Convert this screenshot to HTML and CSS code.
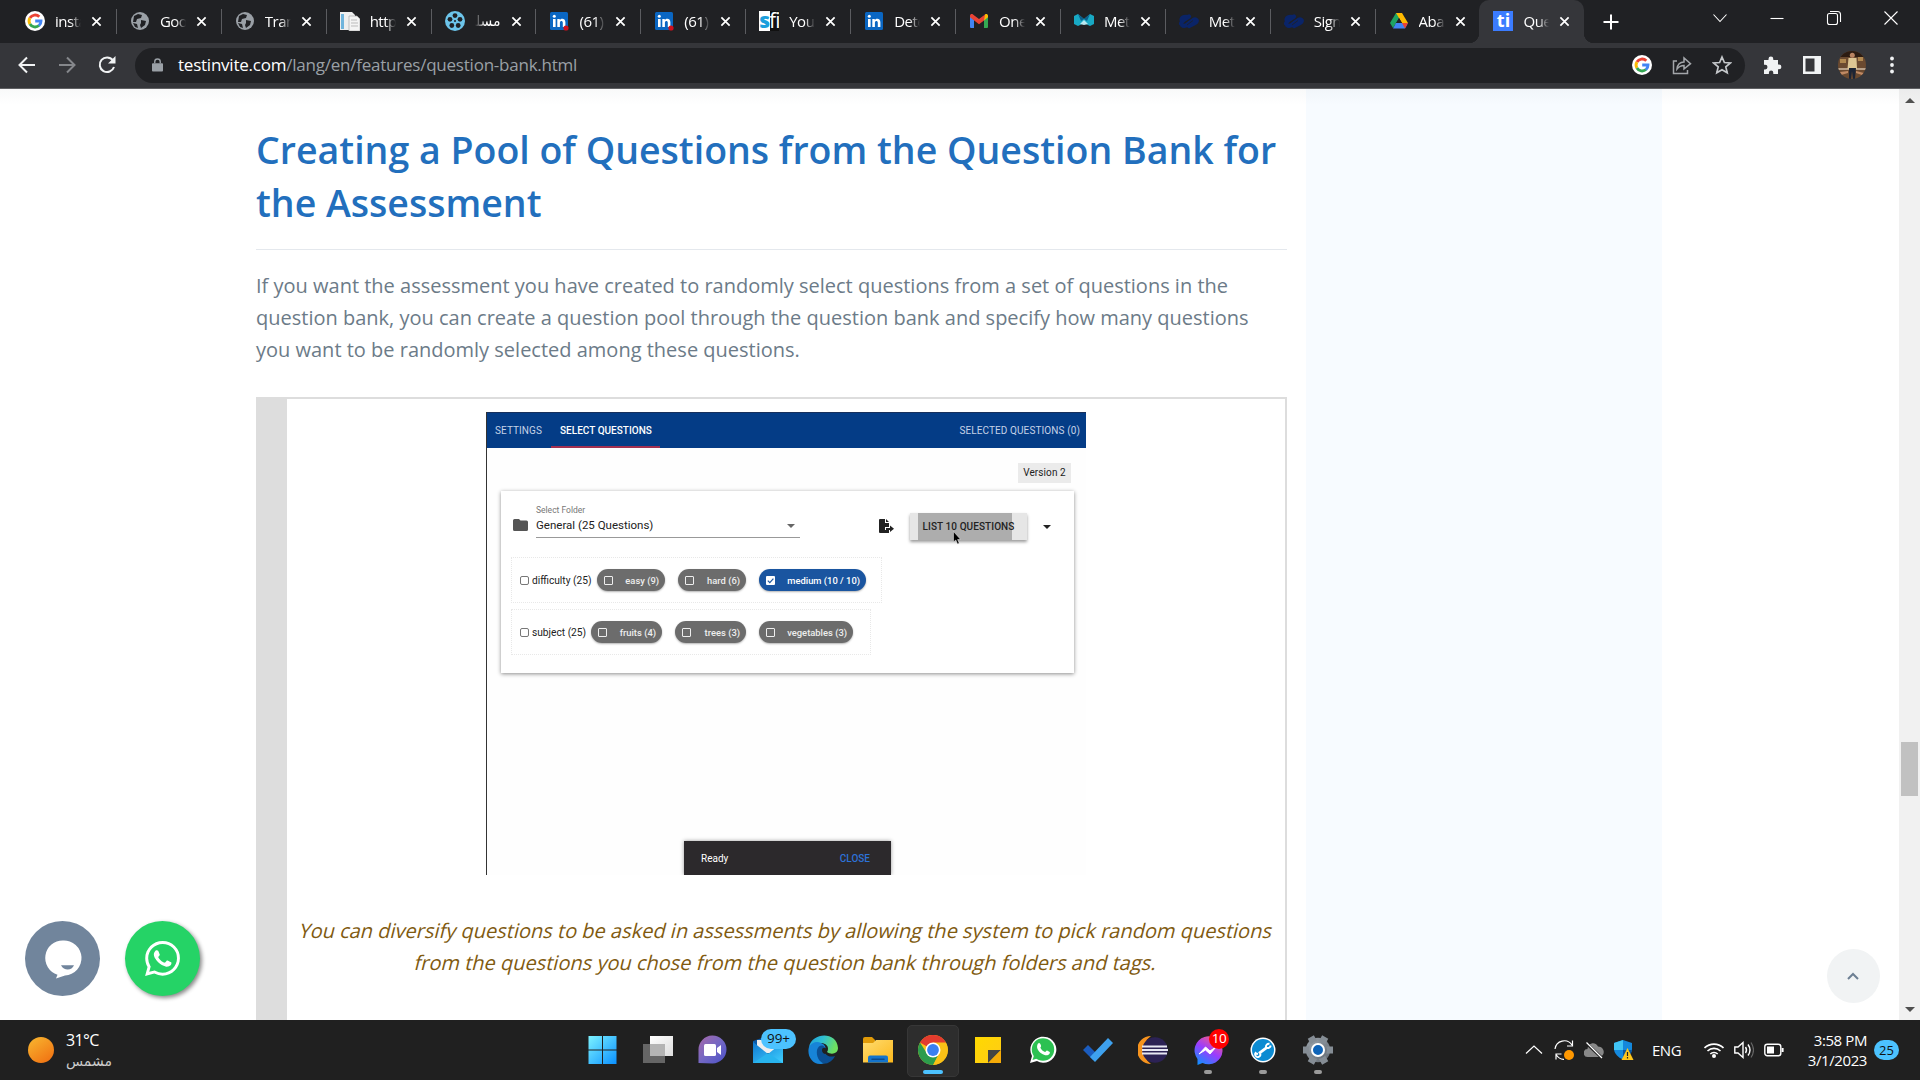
FILE: index.html
```html
<!DOCTYPE html>
<html lang="en">
<head>
<meta charset="utf-8">
<title>Question Bank</title>
<link rel="stylesheet" href="styles.css">
</head>
<body>
<svg class="defs" width="0" height="0" aria-hidden="true">
  <defs>
    <linearGradient id="gWin" x1="0" y1="0" x2="1" y2="1"><stop offset="0" stop-color="#7df3ff"/><stop offset="1" stop-color="#0a90ff"/></linearGradient>
    <linearGradient id="gTask" x1="0" y1="0" x2="1" y2="1"><stop offset="0" stop-color="#fff"/><stop offset="1" stop-color="#ddd"/></linearGradient>
    <linearGradient id="gTeams" x1="0" y1="0" x2="1" y2="1"><stop offset="0" stop-color="#a868a8"/><stop offset=".5" stop-color="#7468c4"/><stop offset="1" stop-color="#4a50c8"/></linearGradient>
    <linearGradient id="gFolder" x1="0" y1="0" x2="1" y2="1"><stop offset="0" stop-color="#ffdc70"/><stop offset="1" stop-color="#fcb81c"/></linearGradient>
    <linearGradient id="gEdge" x1="0" y1="0" x2="1" y2=".3"><stop offset="0" stop-color="#1c9ce0"/><stop offset=".5" stop-color="#30c0d0"/><stop offset="1" stop-color="#6ee060"/></linearGradient>
    <linearGradient id="gMsg" x1=".8" y1="0" x2=".2" y2="1"><stop offset="0" stop-color="#ff5f7a"/><stop offset=".5" stop-color="#9a3cff"/><stop offset="1" stop-color="#1090ff"/></linearGradient>
    <linearGradient id="gGear" x1="0" y1="0" x2="1" y2="1"><stop offset="0" stop-color="#9aa2aa"/><stop offset="1" stop-color="#646c74"/></linearGradient>
    <linearGradient id="gNote" x1="0" y1="0" x2="1" y2="1"><stop offset="0" stop-color="#ffd900"/><stop offset=".7" stop-color="#ffcf10"/><stop offset="1" stop-color="#f8a800"/></linearGradient>
    <linearGradient id="gMail" x1="0" y1="0" x2="1" y2="1"><stop offset="0" stop-color="#0f78d0"/><stop offset="1" stop-color="#40d0ff"/></linearGradient>
    <symbol id="close" viewBox="0 0 12 12"><path d="M1.5 1.5l9 9M10.500 1.500l-9 9" stroke="#fff" stroke-width="1.900" fill="none"/></symbol>
    <symbol id="google" viewBox="0 0 20 20"><circle cx="10" cy="10" r="10" fill="#fff"/><g fill="none" stroke-width="2.900"><path d="M4.900 7A6 6 0 0 1 14.300 5.800" stroke="#ea4335"/><path d="M4.900 13A6 6 0 0 1 4.900 7" stroke="#fbbc05"/><path d="M14 14.500A6 6 0 0 1 4.900 13" stroke="#34a853"/><path d="M10.200 10H16A6 6 0 0 1 13.900 14.600" stroke="#4285f4"/></g></symbol>
    <symbol id="globe" viewBox="0 0 20 20"><circle cx="10" cy="10" r="9" fill="#9aa0a6"/><path d="M4 5l4-2 4 1-1 3-4 1-1 3-3 0zM11 9l5 1-1 4-4 3-1-3 1-2zM3 12l4 1 1 4-3-1z" fill="#202124"/></symbol>
    <symbol id="linkedin" viewBox="0 0 20 20"><rect x="1" y="1" width="18" height="18" rx="1.500" fill="#0a66c2"/><path d="M4 8h2.600v8H4zM8.300 8h2.500v1.200c1.500-2.300 5.600-1.700 5.600 2V16h-2.600v-4.300c0-2.200-2.900-2-2.900 0V16H8.300z" fill="#fff"/><circle cx="5.300" cy="5.300" r="1.500" fill="#fff"/></symbol>
    <symbol id="swirl" viewBox="0 0 20 20"><path d="M2 12.500c0-2 6-5.500 8-7M3 14c2 2 5 0 7-2s6-5 7.500-3-3 4-7.500 6M2.500 9c0-3 5-4 6.500-2.500" fill="none" stroke="#0a2468" stroke-width="4.200" stroke-linecap="round"/><path d="M6 11.500l7-4.500M8 14l6-4.500" stroke="#202124" stroke-width=".8"/></symbol>
    <symbol id="whats" viewBox="0 0 24 24"><path d="M17.500 14.400c-.3-.15-1.760-.87-2.030-.97-.27-.1-.47-.15-.67.150-.2.300-.77.970-.94 1.160-.17.200-.35.220-.64.070-.3-.15-1.250-.46-2.390-1.470-.88-.79-1.480-1.760-1.650-2.060-.17-.3-.02-.46.130-.6.130-.14.300-.35.450-.52.150-.17.200-.3.300-.5.100-.2.050-.37-.03-.52-.07-.15-.67-1.610-.91-2.200-.24-.58-.49-.5-.67-.51l-.57-.01c-.2 0-.52.070-.79.370-.27.300-1.040 1.020-1.040 2.480s1.060 2.870 1.210 3.070c.15.200 2.100 3.200 5.080 4.490.71.300 1.260.49 1.690.62.710.23 1.360.2 1.870.12.570-.09 1.760-.72 2.010-1.410.25-.7.250-1.290.17-1.420-.07-.12-.27-.2-.56-.34M12.050 21.780a9.870 9.870 0 0 1-5.030-1.380l-.36-.21-3.740.98 1-3.650-.24-.37a9.860 9.860 0 0 1-1.510-5.260C2.170 6.440 6.600 2 12.060 2a9.830 9.830 0 0 1 9.880 9.890c0 5.450-4.430 9.890-9.890 9.890M20.470 3.490A11.820 11.820 0 0 0 12.050 0C5.500 0 .16 5.330.16 11.890c0 2.100.55 4.140 1.590 5.940L.06 24l6.300-1.650a11.880 11.880 0 0 0 5.690 1.450c6.550 0 11.890-5.330 11.890-11.890a11.820 11.820 0 0 0-3.470-8.420"/></symbol>
  </defs>
</svg>

<header class="browser">
  <div class="tabstrip">
    <div class="tab"><svg class="fav"><use href="#google"/></svg><span class="name">insta</span><svg class="x"><use href="#close"/></svg></div>
    <div class="tab"><svg class="fav"><use href="#globe"/></svg><span class="name">Goo</span><svg class="x"><use href="#close"/></svg></div>
    <div class="tab"><svg class="fav"><use href="#globe"/></svg><span class="name">Tran</span><svg class="x"><use href="#close"/></svg></div>
    <div class="tab"><svg class="fav" viewBox="0 0 20 20"><path d="M0 1h12l3 3v15H0z" fill="#eee"/><path d="M1 3h3v15H1z" fill="#70b4dc"/><path d="M9 5h8l3 3v12H9z" fill="#f4f4f4" stroke="#aaa" stroke-width=".7"/><path d="M11 9h6M11 12h7M11 15h7" stroke="#bbb"/></svg><span class="name">http</span><svg class="x"><use href="#close"/></svg></div>
    <div class="tab"><svg class="fav" viewBox="0 0 20 20"><circle cx="10" cy="10" r="10" fill="#6cc4ea"/><g fill="#202124"><circle cx="10" cy="4.600" r="2.400"/><circle cx="15" cy="8.300" r="2.400"/><circle cx="13.200" cy="14.500" r="2.400"/><circle cx="6.800" cy="14.500" r="2.400"/><circle cx="5" cy="8.300" r="2.400"/><circle cx="10" cy="10" r="1"/></g></svg><span class="name arabic" dir="rtl">مسلسل</span><svg class="x"><use href="#close"/></svg></div>
    <div class="tab"><svg class="fav" viewBox="0 0 20 20"><use href="#linkedin"/><circle cx="17" cy="17" r="2.600" fill="#d0101c"/></svg><span class="name">(61)</span><svg class="x"><use href="#close"/></svg></div>
    <div class="tab"><svg class="fav" viewBox="0 0 20 20"><use href="#linkedin"/><circle cx="17" cy="17" r="2.600" fill="#d0101c"/></svg><span class="name">(61)</span><svg class="x"><use href="#close"/></svg></div>
    <div class="tab"><span class="fav sfi"><b>s</b><i>fi</i></span><span class="name">You</span><svg class="x"><use href="#close"/></svg></div>
    <div class="tab"><svg class="fav"><use href="#linkedin"/></svg><span class="name">Dete</span><svg class="x"><use href="#close"/></svg></div>
    <div class="tab"><svg class="fav" viewBox="0 0 20 20"><path d="M1 5v11a1 1 0 0 0 1 1h3V9z" fill="#4285f4"/><path d="M19 5v11a1 1 0 0 1-1 1h-3V9z" fill="#34a853"/><path d="M15 5v4.500L19 6.300V5c0-2-2-2.500-3-1.500z" fill="#fbbc04"/><path d="M1 5c0-2 2-2.500 3-1.500L10 8l6-4.500-1 6-5 3.800L1 6.300z" fill="#ea4335"/></svg><span class="name">One</span><svg class="x"><use href="#close"/></svg></div>
    <div class="tab"><svg class="fav" viewBox="0 0 20 20"><path d="M0 5l4-2 6 5 6-5 4 2v8l-4 2-6-3-6 3-4-2z" fill="#18a9c4"/><path d="M4 3l6 5-3 2zM16 3l-6 5 3 2z" fill="#0c5f8c"/><path d="M6 13l4-4 4 4-4 1z" fill="#b8e8f0"/></svg><span class="name">Met</span><svg class="x"><use href="#close"/></svg></div>
    <div class="tab"><svg class="fav"><use href="#swirl"/></svg><span class="name">Met</span><svg class="x"><use href="#close"/></svg></div>
    <div class="tab"><svg class="fav"><use href="#swirl"/></svg><span class="name">Sign</span><svg class="x"><use href="#close"/></svg></div>
    <div class="tab"><svg class="fav" viewBox="0 0 20 20"><path d="M7 2h6l-5.800 10L4 17 1 12z" fill="#1ea362"/><path d="M7 2h6l6 10h-6z" fill="#ffba00"/><path d="M7 12h12l-3 5.500H4z" fill="#4285f4"/><path d="M13 12h6l-3 5.500z" fill="#ea4335"/><path d="M10 7l3 5H7z" fill="#202124"/></svg><span class="name">Aba</span><svg class="x"><use href="#close"/></svg></div>
    <div class="tab active"><span class="fav ti">ti</span><span class="name">Que</span><svg class="x"><use href="#close"/></svg></div>
    <svg class="plus" viewBox="0 0 16 16"><path d="M8 .5v15M.5 8h15" stroke="#fff" stroke-width="2"/></svg>
    <div class="winctl">
      <svg viewBox="0 0 16 16"><path d="M1.500 4.500L8 11.500l6.500-7" /></svg>
      <svg viewBox="0 0 16 16"><path d="M1.500 8.500h13"/></svg>
      <svg viewBox="0 0 16 16"><rect x="1.500" y="3.500" width="10" height="11" rx="2"/><path d="M4 1.500h7.500a3 3 0 0 1 3 3V12"/></svg>
      <svg viewBox="0 0 16 16"><path d="M1.500 1.500l13 13M14.500 1.500l-13 13"/></svg>
    </div>
  </div>
  <div class="toolbar">
    <svg class="nav" viewBox="0 0 20 20"><path d="M18 10H3M10 2.500L2.500 10l7.500 7.500" stroke="#f1f3f4"/></svg>
    <svg class="nav" viewBox="0 0 20 20"><path d="M2 10h15M10 2.500l7.500 7.500L10 17.500" stroke="#85878b"/></svg>
    <svg class="nav" viewBox="0 0 20 20"><path d="M15.800 5.200A7.300 7.300 0 1 0 17 12" stroke="#f1f3f4"/><path d="M18.500 1v7.500H11z" fill="#f1f3f4"/></svg>
    <div class="omnibox">
      <svg class="lock" viewBox="0 0 12 14"><rect y="5" width="12" height="9" rx="1" fill="#9aa0a6"/><path d="M3 5V3.500a3 3 0 0 1 6 0V5" fill="none" stroke="#9aa0a6" stroke-width="1.500"/></svg>
      <span class="url"><em>testinvite.com</em>/lang/en/features/question-bank.html</span>
      <svg class="oi" viewBox="0 0 20 20"><use href="#google"/></svg>
      <svg class="oi" viewBox="0 0 20 20"><path d="M5 6H1.500v12.500h14V15M5 14c.5-4.500 3-7 7-7V3l6.500 5.700L12 14v-3.500c-3 0-5 1-7 3.500z" fill="none" stroke="#a3a6aa" stroke-width="1.500"/></svg>
      <svg class="oi" viewBox="0 0 20 20"><path d="M10 2l2.400 5.500 6 .5-4.600 3.900 1.400 5.900L10 14.700l-5.200 3.100 1.400-5.900L1.600 8l6-.5z" fill="none" stroke="#c4c7ca" stroke-width="1.700"/></svg>
    </div>
    <svg class="ext" viewBox="0 0 20 20"><path d="M2 5h4.500V4a2.400 2.400 0 0 1 4.800 0v1H16v4.500h1a2.400 2.400 0 0 1 0 4.800h-1V19h-4.700v-1.200a2.200 2.200 0 0 0-4.400 0V19H2v-4.600h1.200a2.300 2.300 0 0 0 0-4.600H2z" fill="#f1f3f4"/></svg>
    <svg class="panel" viewBox="0 0 18 18"><path d="M0 0h18v18H0z" fill="#f1f3f4"/><path d="M2.500 2.500h9v13h-9z" fill="#35363a"/></svg>
    <svg class="avatar" viewBox="0 0 28 28"><clipPath id="av"><circle cx="14" cy="14" r="14"/></clipPath><g clip-path="url(#av)"><path d="M0 0h28v28H0z" fill="#6b4a30"/><path d="M0 0h28v6H0z" fill="#2c1c12"/><path d="M2 8h6v4H2zM20 6h5v4h-5z" fill="#b08850"/><path d="M0 17h28v2H0z" fill="#b8a088"/><path d="M2 21l8-1v2l-7 2zM18 20l8 2-2 2-6-2z" fill="#c08a64"/><path d="M10.500 7h8l.5 11H9.500z" fill="#ddc694"/><circle cx="14.300" cy="4.300" r="2.500" fill="#b98462"/><path d="M11 17h7l-1 11h-2l-1-8-1 8h-2z" fill="#1c2434"/></g></svg>
    <svg class="dots" viewBox="0 0 4 18"><circle cx="2" cy="2.500" r="1.900"/><circle cx="2" cy="9" r="1.900"/><circle cx="2" cy="15.500" r="1.900"/></svg>
  </div>
</header>

<main class="page">
  <article class="article">
    <h2>Creating a Pool of Questions from the Question Bank for<br>the Assessment</h2>
    <p class="lead">If you want the assessment you have created to randomly select questions from a set of questions in the<br>question bank, you can create a question pool through the question bank and specify how many questions<br>you want to be randomly selected among these questions.</p>
    <figure class="figure">
      <div class="app">
        <div class="appbar"><span class="set">SETTINGS</span><span class="sel">SELECT QUESTIONS</span><span class="count">SELECTED QUESTIONS (0)</span></div>
        <div class="version">Version 2</div>
        <section class="card">
          <div class="filters">
            <svg class="folder" viewBox="0 0 15 12"><path d="M0 1.500Q0 0 1.500 0H6l1.500 1.500h6Q15 1.500 15 3v7.500q0 1.500-1.500 1.500h-12Q0 12 0 10.500z" fill="#555"/></svg>
            <div class="select"><small>Select Folder</small><div class="value">General (25 Questions)<svg viewBox="0 0 8 4"><path d="M0 0h8L4 4z" fill="#666"/></svg></div></div>
            <svg class="export" viewBox="0 0 15 14"><path d="M0 1q0-1 1-1h5v4h4v4H6v3h4v3H1q-1 0-1-1zM7 0l3 3H7z" fill="#222"/><path d="M7 9h4V6.500l4 3.200-4 3.200V11H7z" fill="#222"/></svg>
            <div class="list"><span>LIST 10 QUESTIONS</span><svg class="cursor" viewBox="0 0 8 14"><path d="M.5.500v10.500l2.300-2L4.500 13l1.700-.8-1.600-3.700h3z" fill="#000" stroke="#eee" stroke-width=".5"/></svg></div>
            <svg class="caret" viewBox="0 0 8 4"><path d="M0 0h8L4 4z" fill="#222"/></svg>
          </div>
          <div class="tags r1"><i class="cb"></i><span class="group">difficulty (25)</span><span class="pill"><i></i>easy (9)</span><span class="pill"><i></i>hard (6)</span><span class="pill on"><svg viewBox="0 0 9 9"><rect width="9" height="9" rx="1" fill="#fff"/><path d="M1.800 4.600l2 2 3.600-4" stroke="#1c56a0" stroke-width="1.200" fill="none"/></svg>medium (10 / 10)</span></div>
          <div class="tags r2"><i class="cb"></i><span class="group">subject (25)</span><span class="pill"><i></i>fruits (4)</span><span class="pill"><i></i>trees (3)</span><span class="pill"><i></i>vegetables (3)</span></div>
        </section>
        <div class="snack"><span>Ready</span><b>CLOSE</b></div>
      </div>
      <figcaption><span>You can diversify questions to be asked in assessments by allowing the system to pick random questions</span><span>from the questions you chose from the question bank through folders and tags.</span></figcaption>
    </figure>
  </article>
  <aside class="side"></aside>
  <div class="scrollbar"><i class="up"></i><div class="thumb"></div><i class="down"></i></div>

  <svg class="chat" viewBox="0 0 75 75"><circle cx="37.500" cy="37.500" r="37.500" fill="#71859c"/><path d="M38 19.500a17.500 17.500 0 0 0-5.500 34.200L31 57.500l9-3A17.500 17.500 0 0 0 38 19.500z" fill="#fff"/><path d="M36 44.300h13c-2 5.500-10 6-13 0z" fill="#71859c"/></svg>
  <div class="wa"><svg viewBox="0 0 24 24" fill="#fff"><use href="#whats"/></svg></div>
  <div class="totop"><svg viewBox="0 0 12 8"><path d="M1 7l5-5 5 5" fill="none" stroke="#6d7f93" stroke-width="2"/></svg></div>
</main>

<footer class="taskbar">
  <div class="weather"><i class="sun"></i><div><div class="deg">31°C</div><div class="sunny" dir="rtl">مشمس</div></div></div>
  <div class="apps">
    <div class="app-i"><svg viewBox="0 0 30 30"><path d="M.5 1H14v13.500H.5zM15 1h13.500v13.500H15zM.5 15.500H14V29H.5zM15 15.500h13.500V29H15z" fill="url(#gWin)"/></svg></div>
    <div class="app-i"><svg viewBox="0 0 30 30"><path d="M7 1h23v20H7z" fill="url(#gTask)"/><path d="M0 9h22v19H0z" fill="#777" opacity=".8"/><path d="M7 9h15v12H7z" fill="#b4b4b4"/></svg></div>
    <div class="app-i"><svg viewBox="0 0 30 30"><path d="M.5 28V15A14 14 0 1 1 14.500 28.500z" fill="url(#gTeams)"/><rect x="6" y="9" width="12" height="12" rx="1.500" fill="#fff"/><path d="M19 13l4-3v10l-4-3z" fill="#fff"/></svg></div>
    <div class="app-i"><svg viewBox="0 0 30 30"><path d="M0 6l15-5 15 5v10H0z" fill="#0a5aa8"/><path d="M4 5h22v13H4z" fill="#eee"/><path d="M0 7l15 12L30 7v21H0z" fill="url(#gMail)"/><path d="M0 28l15-10 15 10z" fill="#28b4ee"/></svg><span class="badge blue">99+</span></div>
    <div class="app-i"><svg viewBox="0 0 30 30"><path d="M1 12C4-3 29-4 30 13c0 6-7 7-11 4 3-5-1-9-6-9-6 0-9 3-12 4z" fill="url(#gEdge)"/><path d="M1 12C4 7 9 6 13 8c5 2 5 5 4 8-6-1-6 8 2 11-12 7-21-5-18-15z" fill="#1784d8"/><path d="M9 15c2-7 9-5 8 0-1 4 3 8 10 6-3 6-8 8-11 7.500C11 27 8 21 9 15z" fill="#0b4f94"/><path d="M14 15c0-3 5-3 5 .500 0 2-2 2.500-1 3.500-3 0-4-2-4-4z" fill="#202020"/></svg></div>
    <div class="app-i"><svg viewBox="0 0 30 30"><path d="M0 4q0-2 2-2h7l3 3v5H0z" fill="#e09a08"/><path d="M0 8h10l3-3h17v22.500H0z" fill="url(#gFolder)"/><path d="M5 27.500v-5q0-2 2-2h16q2 0 2 2v5z" fill="#1474cc"/><path d="M9 24.300h12" stroke="#0b4a8c" stroke-width="1.500" stroke-linecap="round"/></svg></div>
    <div class="app-i current"><svg viewBox="0 0 30 30"><circle cx="15" cy="15" r="15" fill="#fbc116"/><path d="M15 15L2 7.500A15 15 0 0 1 28 7.500H15z" fill="#e33b2e"/><path d="M2 7.500L9 18.500l6 3.500-3.500 7.600A15 15 0 0 1 2 7.500z" fill="#2c9c4c"/><path d="M15 29.900l6.500-11.400L15 15v15z" fill="#fbc116"/><path d="M8.500 18.500L15 22l6-3-5.600 11a15 15 0 0 1-4-.500z" fill="#2c9c4c"/><path d="M20 20.500L15 30a15 15 0 0 0 13-22H19z" fill="#fbc116"/><circle cx="15" cy="15" r="7.500" fill="#fff"/><circle cx="15" cy="15" r="5.900" fill="#3a7ff0"/></svg><u></u></div>
    <div class="app-i"><svg viewBox="0 0 30 30"><path d="M2 2h26v14L15 28H2z" fill="url(#gNote)"/><path d="M15 28V15h13z" fill="#444"/><path d="M15 28l13-13v13z" fill="#f5ab08"/></svg></div>
    <div class="app-i"><svg viewBox="0 0 30 30"><path d="M2 28l2-7A13 13 0 1 1 9 26z" fill="#fff"/><circle cx="15" cy="14.500" r="11.200" fill="#2cc152"/><path d="M4.500 25l2-6 4 4z" fill="#2cc152"/><path d="M10 8.500c1.500-1.500 2.300 0 3 2 .5 1.300-1 1.700-.5 2.500 1 2 2.500 3 4.500 4 1 0 1.200-2 2.500-1.300 2 1 3.200 1.300 2 3-2 2.600-5 1.700-8-.2-3-2-6-6-3.500-10z" fill="#fff"/></svg></div>
    <div class="app-i"><svg viewBox="0 0 30 30"><path d="M0 15l5-5 8 8-3 7z" fill="#1b5cbe"/><path d="M7 22L25 3l5 5-18 19z" fill="#3ea1ee"/></svg></div>
    <div class="app-i"><svg viewBox="0 0 30 30"><path d="M13 1a14 14 0 0 0 0 28A17 17 0 0 1 13 1z" fill="#f7941e"/><circle cx="17" cy="15" r="12.800" fill="#2c2255"/><path d="M4 11.500h25M4 15h26M4 18.500h25" stroke="#e8e8f4" stroke-width="1.900"/></svg></div>
    <div class="app-i run"><svg viewBox="0 0 30 30"><path d="M4.500 30v-6A14 14 0 1 1 9.500 28z" fill="url(#gMsg)"/><path d="M6 19l6.500-7 4.500 4 6-4-6 7-4.500-4z" fill="#fff" stroke="#fff"/></svg><span class="badge red">10</span><u></u></div>
    <div class="app-i run"><svg viewBox="0 0 30 30"><circle cx="15" cy="15" r="12.500" fill="#fff"/><circle cx="15" cy="15" r="11" fill="#0c8bd2"/><path d="M11 18.300l8-6" stroke="#fff" stroke-width="2.800"/><path d="M7.500 18.500l2.500.5M12.300 18.800a2.600 2.600 0 1 1-4-1.500M18 12.500a3 3 0 0 1 3.500-3.700M22.700 10.500a3 3 0 0 1-4.700 2" stroke="#fff" stroke-width="1.900" fill="none"/></svg><u></u></div>
    <div class="app-i run"><svg viewBox="0 0 30 30"><circle cx="15" cy="15" r="12.200" fill="url(#gGear)"/><g stroke="#858d95" stroke-width="7"><path d="M15 15h15M15 15H0M15 15l7.200 13M15 15L7.800 2M15 15l7.200-13M15 15L7.800 28"/></g><circle cx="15" cy="15" r="9" fill="url(#gGear)"/><circle cx="15" cy="15" r="6" fill="#0f64b8" stroke="#fff" stroke-width="2"/></svg><u></u></div>
  </div>
  <div class="tray">
    <svg viewBox="0 0 20 20"><path d="M2 13.500l8-7.500 8 7.500"/></svg>
    <svg viewBox="0 0 20 20"><path d="M1 9A9.300 9.300 0 0 1 18 5M18.500.500V6H13M2 19.500V14h5.500M2 14.500c2 3 5 5 8 4.800"/><circle cx="15" cy="15" r="5" fill="#ff9800" stroke="none"/></svg>
    <svg viewBox="0 0 20 20"><path d="M4 17a4 4 0 0 1-.5-8C4 3 11 1 14 6.500c7 0 8 10 1 10.500z" fill="#888" stroke="none"/><path d="M2 3l16 15" stroke="#202020" stroke-width="3"/><path d="M2.500 2.500L18 18"/></svg>
    <svg viewBox="0 0 20 20"><path d="M9 0l9 3v6c0 5-5 9-9 10.500C5 18 0 14 0 9V3z" fill="#1488dc" stroke="none"/><path d="M9 0v10H0V3z" fill="#40c4f4" stroke="none"/><path d="M9 10h9c-1 5-5 8-9 9.500z" fill="#0a56a0" stroke="none"/><path d="M13.500 8l6 12h-12z" fill="#ffc61a" stroke="none"/><path d="M13.500 12v4M13.500 17v1.500" stroke="#222"/></svg>
    <span class="lang">ENG</span>
    <svg viewBox="0 0 20 20"><path d="M.5 8a13.500 13.500 0 0 1 19 0M3.500 11a9.300 9.300 0 0 1 13 0M6.300 14a5.300 5.300 0 0 1 7.400 0" stroke-width="1.600"/><circle cx="10" cy="16" r="2" fill="#fff" stroke="none"/></svg>
    <svg viewBox="0 0 20 20"><path d="M.8 7v6H4l5 4.500v-15L4 7zM11.500 7q2 3 0 6M14 4.500q4 5.500 0 11" stroke-width="1.400"/><path d="M17 2.500q5 7.500 0 15" stroke="#666"/></svg>
    <svg viewBox="0 0 20 20"><rect x=".8" y="4.300" width="16" height="11.500" rx="2.500" stroke-width="1.400"/><path d="M3 6.500h7v7H3z" fill="#fff" stroke="none"/><path d="M18.600 8v4" stroke-width="2"/></svg>
    <div class="clock"><div>3:58 PM</div><div>3/1/2023</div></div>
    <span class="notif">25</span>
  </div>
</footer>
</body>
</html>
```
FILE: styles.css
```css
* { box-sizing: border-box; }
body { margin: 0; width: 1920px; height: 1080px; overflow: hidden; display: flex; flex-direction: column; font-family: "Open Sans", "Noto Sans", sans-serif; background: #fff; }
svg { display: block; flex: none; }
.defs { position: absolute; }

/* browser chrome */
.browser { height: 89px; flex: none; background: #35363a; border-bottom: 1px solid #5f6063; }
.tabstrip { height: 43px; background: #202124; display: flex; align-items: center; padding-left: 11px; }
.tab { width: 104.900px; height: 43px; flex: none; display: flex; align-items: center; padding: 0 0 1px 14px; position: relative; }
.tab:not(.active)::after { content: ""; position: absolute; right: -1px; top: 9px; width: 1px; height: 25px; background: #5b5c60; }
.tab:nth-child(14)::after { display: none; }
.tab.active { background: #35363a; border-radius: 10px 10px 0 0; }
.tab.active::before { content: ""; position: absolute; left: -10px; right: -10px; bottom: 0; height: 10px; background: radial-gradient(circle at 0 0, transparent 10px, #35363a 10.500px) left / 10px 10px no-repeat, radial-gradient(circle at 100% 0, transparent 10px, #35363a 10.500px) right / 10px 10px no-repeat; }
.fav { width: 20px; height: 20px; flex: none; }
.name { width: 26px; margin: -1px 10px 0; flex: none; overflow: hidden; white-space: nowrap; color: #fff; font: 15px/20px "Open Sans", sans-serif; letter-spacing: -.5px; -webkit-mask-image: linear-gradient(90deg, #000 60%, transparent); mask-image: linear-gradient(90deg, #000 60%, transparent); }
.name.arabic { font-family: "DejaVu Sans", sans-serif; font-size: 14px; -webkit-mask-image: linear-gradient(270deg, #000 60%, transparent); mask-image: linear-gradient(270deg, #000 60%, transparent); }
.x { width: 11px; height: 11px; }
.sfi { background: linear-gradient(90deg, #fff 11px, #111 11px); font: bold 21px/18px "Open Sans", sans-serif; color: #fff; display: flex; overflow: hidden; letter-spacing: -1px; }
.sfi b { color: #1c9fdc; }
.sfi i { font-style: normal; font-weight: 400; }
.ti { background: #3b7cff; color: #fff; font: bold 18px/18px "Open Sans", sans-serif; text-align: center; }
.plus { width: 16px; height: 16px; margin-left: 19px; }
.winctl { display: flex; margin: -7px 21px 0 auto; gap: 41px; }
.winctl svg { width: 16px; height: 16px; fill: none; stroke: #fff; stroke-width: 1.100; }
.toolbar { height: 45px; display: flex; align-items: center; padding-bottom: 1px; }
.nav { width: 20px; height: 20px; fill: none; stroke-width: 2; margin-left: 17px; }
.nav + .nav { margin-left: 20px; }
.omnibox { width: 1610px; height: 35px; margin-left: 18px; border-radius: 18px; background: #202124; display: flex; align-items: center; padding: 0 13px 0 17px; }
.lock { width: 11px; height: 14px; }
.url { flex: 1; margin-left: 15px; color: #9aa0a6; font: 17px/24px "Open Sans", sans-serif; white-space: nowrap; letter-spacing: -.23px; }
.url em { font-style: normal; color: #fff; }
.oi { width: 20px; height: 20px; margin-left: 20px; }
.ext { width: 20px; height: 20px; margin-left: 17px; }
.panel { width: 18px; height: 18px; margin-left: 21px; }
.avatar { width: 28px; height: 28px; margin-left: 17px; }
.dots { width: 4px; height: 18px; margin-left: 24px; fill: #f1f3f4; }

/* page */
.page { height: 931px; flex: none; display: flex; position: relative; overflow: hidden; }
.page::before { content: ""; position: absolute; inset: 0 0 auto; height: 16px; background: linear-gradient(rgba(90,100,110,.04), transparent); }
.article { width: 1031px; margin-left: 256px; flex: none; }
h2 { margin: 0; padding: 34px 0 19px; height: 161px; border-bottom: 1px solid #e4e8ed; color: #226fbd; font-size: 37.500px; line-height: 53px; font-weight: 600; white-space: nowrap; }
.lead { margin: 20px 0 31px; color: #6c7b88; font-size: 20px; line-height: 32px; white-space: nowrap; }
.figure { margin: 0; height: 700px; border: 2px solid #ddd; border-left-width: 31px; padding: 13px 0 0 199px; }
.app { width: 600px; height: 463px; border-left: 1px solid #333; font-family: Roboto, sans-serif; color: #222; background: #fefefe; overflow: hidden; display: flex; flex-direction: column; }
.appbar { height: 36px; flex: none; background: #043c86; border-top: 1px solid #17305c; display: flex; color: #c4d2e6; font-size: 10px; line-height: 35px; white-space: nowrap; padding-right: 6px; }
.set { width: 64px; padding-left: 8px; letter-spacing: .08px; }
.sel { width: 109px; padding-left: 9px; color: #fff; font-weight: 500; border-bottom: 2px solid #a23050; letter-spacing: .02px; }
.count { margin-left: auto; letter-spacing: .1px; }
.version { align-self: flex-end; margin: 15px 15px 0; width: 53px; height: 20px; background: #ebebeb; font-size: 10px; line-height: 20px; text-align: center; letter-spacing: .1px; }
.card { flex: none; margin: 8px 12px 0 14px; height: 182px; background: #fff; box-shadow: 0 1px 4px rgba(0,0,0,.45); padding: 12px 0 0 10px; }
.filters { display: flex; height: 54px; position: relative; }
.folder { width: 15px; height: 12px; margin: 16px 0 0 2px; }
.select { width: 264px; height: 34px; margin: 1px 0 0 8px; border-bottom: 1px solid #999; }
.select small { display: block; font-size: 8.500px; line-height: 13px; color: #777; }
.value { display: flex; justify-content: space-between; font-size: 11.500px; line-height: 16px; padding-right: 5px; }
.value svg { width: 8px; height: 4px; margin-top: 7px; }
.export { width: 15px; height: 14px; margin: 16px 0 0 79px; }
.list { width: 117px; height: 27px; margin: 10px 0 0 16px; background: linear-gradient(90deg, #e6e6e6 8px, #adadad 8px 102px, #e6e6e6 102px); box-shadow: 0 2px 3px rgba(0,0,0,.4); font-size: 10px; font-weight: 500; line-height: 27px; text-align: center; position: relative; white-space: nowrap; letter-spacing: .07px; }
.cursor { position: absolute; left: 43px; top: 18px; width: 8px; height: 14px; }
.caret { width: 8px; height: 4px; margin: 22px 0 0 16px; }
.tags { height: 46px; border: 1px dotted #e8e8e8; display: flex; align-items: center; padding-left: 8px; }
.r1 { width: 371px; } .r2 { width: 360px; margin-top: 6px; }
.cb { width: 9px; height: 9px; border: 1px solid #777; border-radius: 2px; }
.group { width: 68px; padding-left: 3px; font-size: 10.200px; white-space: nowrap; }
.pill { height: 22px; width: 68px; margin-right: 13px; border-radius: 11px; background: #6c6c6c; color: #eee; font-size: 9.400px; font-weight: 500; display: flex; align-items: center; justify-content: space-between; padding: 0 6px 0 7px; box-shadow: 0 1px 2px rgba(0,0,0,.3); white-space: nowrap; flex: none; }
.pill i { width: 9px; height: 9px; border: 1px solid #eee; border-radius: 1px; }
.pill svg { width: 9px; height: 9px; }
.pill.on { width: 107px; background: #1a55a0; color: #fff; }
.r2 .group { width: 62px; } .r2 .pill { width: 71px; }
.r2 .pill:nth-child(5) { width: 94px; }
.snack { width: 207px; height: 34px; flex: none; margin: auto 0 0 197px; background: #2c292c; color: #fff; display: flex; justify-content: space-between; padding: 0 21px 0 17px; font-size: 10px; line-height: 35px; box-shadow: 0 0 4px rgba(0,0,0,.4); }
.snack b { color: #2c72d8; font-weight: 500; }
figcaption { margin: 40px 0 0 -199px; display: flex; flex-direction: column; align-items: center; font-size: 20px; line-height: 32px; color: #805a10; white-space: nowrap; }
figcaption span { transform: skewX(-14deg); }
.side { margin-left: 19px; width: 356px; background: #f7fbff; }
.scrollbar { margin-left: auto; width: 21px; background: #f1f1f1; display: flex; flex-direction: column; align-items: center; padding: 9px 0 8px; }
.scrollbar i { border: 5px solid transparent; height: 0; }
.up { border-bottom-color: #505050 !important; border-top: 0 !important; }
.down { border-top-color: #505050 !important; border-bottom: 0 !important; margin-top: auto; }
.thumb { width: 17px; height: 54px; background: #c1c1c1; margin-top: 639px; }
.chat { position: absolute; left: 25px; top: 832px; width: 75px; height: 75px; }
.wa { position: absolute; left: 125px; top: 832px; width: 75px; height: 75px; border-radius: 50%; background: #25d366; box-shadow: 2px 2px 4px #888; padding: 20px; }
.wa svg { width: 35px; height: 35px; }
.totop { position: absolute; left: 1827px; top: 860px; width: 53px; height: 54px; border-radius: 50%; background: #f1f3f4; display: grid; place-items: center; }
.totop svg { width: 12px; height: 8px; margin-right: 1px; }

/* taskbar */
.taskbar { height: 60px; flex: none; background: #202020; display: grid; grid-template-columns: 575px 770px 1fr; color: #fff; }
.weather { display: flex; padding: 10px 0 0 28px; gap: 12px; font-size: 15px; }
.sun { width: 26px; height: 26px; margin-top: 7px; border-radius: 50%; background: linear-gradient(145deg, #f8b830, #f06c10); }
.deg { line-height: 20px; letter-spacing: -.6px; font-size: 16px; }
.sunny { font: 14px/23px "DejaVu Sans", sans-serif; color: #ccc; }
.apps { display: flex; }
.app-i { width: 55px; height: 60px; position: relative; display: grid; place-items: center; }
.app-i > svg { width: 30px; height: 30px; }
.current::before { content: ""; position: absolute; inset: 5px 2px; width: 50px; height: 50px; background: #2d2d2d; border: 1px solid #373737; border-radius: 5px; }
.current svg { position: relative; }
.app-i u { position: absolute; bottom: 6px; left: 24px; width: 8px; height: 4px; border-radius: 2px; background: #9a9a9a; }
.current u { width: 20px; left: 18px; background: #4cc2ff; }
.badge { position: absolute; top: 9px; height: 20px; border-radius: 10px; font-size: 13.500px; line-height: 19px; text-align: center; }
.blue { left: 21px; width: 35px; background: #4cc2ff; color: #111; }
.red { left: 29px; width: 20px; background: #f00; letter-spacing: -.5px; }
.tray { display: flex; align-items: center; padding-left: 179px; gap: 10px; }
.tray svg { width: 20px; height: 20px; fill: none; stroke: #fff; stroke-width: 1.200; }
.lang { width: 29px; margin: 0 13px 0 8px; font-size: 15px; letter-spacing: -.5px; }
.clock { width: 73px; margin-top: -1px; text-align: right; font-size: 15px; line-height: 20px; letter-spacing: -.4px; white-space: nowrap; }
.notif { width: 25px; height: 20px; margin-left: -3px; border-radius: 10px; background: #4cc2ff; color: #111; font-size: 13px; line-height: 20px; text-align: center; }
```
